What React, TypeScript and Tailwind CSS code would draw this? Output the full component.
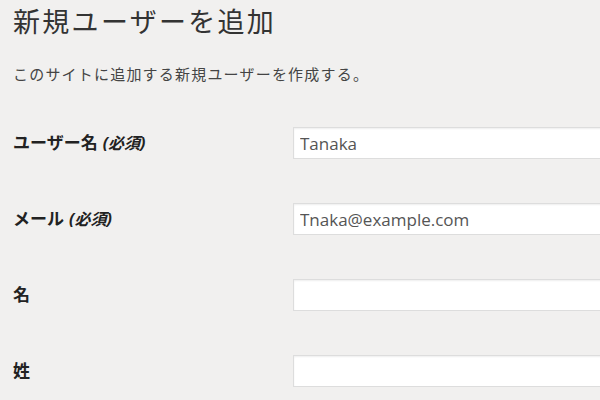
export default function App() {
  const rows = [
    { label: "ユーザー名", required: true, value: "Tanaka" },
    { label: "メール", required: true, value: "Tnaka@example.com" },
    { label: "名", required: false, value: "" },
    { label: "姓", required: false, value: "" },
  ];

  return (
    <div className="h-[400px] w-[600px] overflow-hidden bg-[#f1f0ef] pl-[13px] font-['Open_Sans','Noto_Sans_CJK_JP',sans-serif] text-[#23282d]">
      {/* Heading */}
      <h1 className="mt-[4px] text-[27px] leading-[36px] tracking-[2.3px] text-[#333]">
        新規ユーザーを追加
      </h1>
      <p className="mt-[22px] text-[15px] leading-[24px] tracking-[1.2px] text-[#444]">
        このサイトに追加する新規ユーザーを作成する。
      </p>

      {/* Form rows */}
      <div className="mt-[41px] flex flex-col gap-[44px]">
        {rows.map((row) => (
          <div key={row.label} className="flex items-center">
            <label className="w-[280px] shrink-0 text-[17px] font-bold leading-[32px] text-[#222]">
              {row.label}
              {row.required && (
                <span className="ml-[5px] text-[16px] italic">(必須)</span>
              )}
            </label>
            <input
              type="text"
              defaultValue={row.value}
              className="h-[32px] w-[340px] shrink-0 border border-[#dddddd] bg-white px-[6px] text-[17px] text-[#555] shadow-[inset_0_1px_2px_rgba(0,0,0,0.07)] outline-none"
            />
          </div>
        ))}
      </div>
    </div>
  );
}
